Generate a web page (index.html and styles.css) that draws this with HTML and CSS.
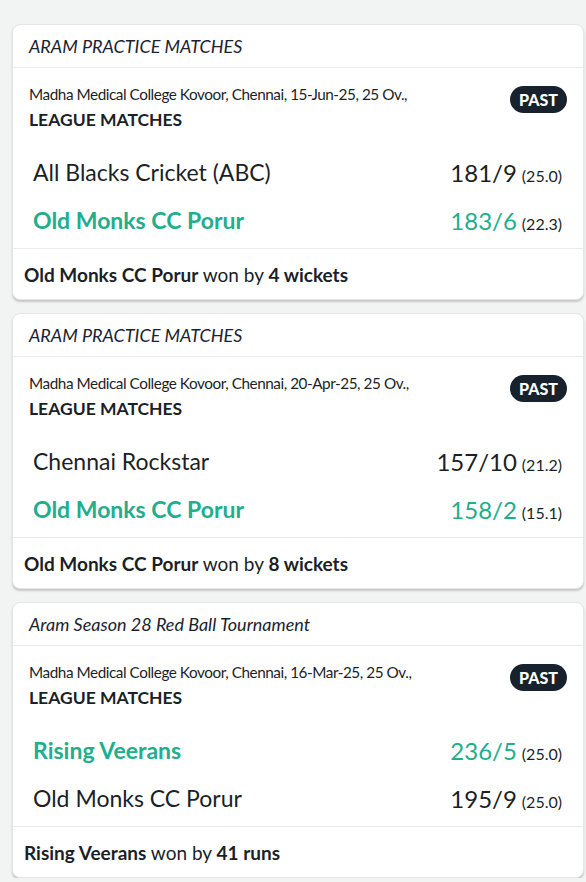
FILE: index.html
```html
<!DOCTYPE html>
<html>
<head>
<meta charset="utf-8">
<link rel="stylesheet" href="styles.css">
</head>
<body>
<div class="list">
  <div class="card">
    <div class="card-head">ARAM PRACTICE MATCHES</div>
    <div class="card-body">
      <div class="meta">
        <div class="meta-text">
          <div class="venue">Madha Medical College Kovoor, Chennai, 15-Jun-25, 25 Ov.,</div>
          <div class="stage">LEAGUE MATCHES</div>
        </div>
        <span class="badge">PAST</span>
      </div>
      <div class="teams">
        <div class="team">
          <span class="name">All Blacks Cricket (ABC)</span>
          <span class="score">181/9<small>(25.0)</small></span>
        </div>
        <div class="team win">
          <span class="name">Old Monks CC Porur</span>
          <span class="score">183/6<small>(22.3)</small></span>
        </div>
      </div>
    </div>
    <div class="result"><p><b>Old Monks CC Porur</b> won by <b>4 wickets</b></p></div>
  </div>

  <div class="card">
    <div class="card-head">ARAM PRACTICE MATCHES</div>
    <div class="card-body">
      <div class="meta">
        <div class="meta-text">
          <div class="venue">Madha Medical College Kovoor, Chennai, 20-Apr-25, 25 Ov.,</div>
          <div class="stage">LEAGUE MATCHES</div>
        </div>
        <span class="badge">PAST</span>
      </div>
      <div class="teams">
        <div class="team">
          <span class="name">Chennai Rockstar</span>
          <span class="score">157/10<small>(21.2)</small></span>
        </div>
        <div class="team win">
          <span class="name">Old Monks CC Porur</span>
          <span class="score">158/2<small>(15.1)</small></span>
        </div>
      </div>
    </div>
    <div class="result"><p><b>Old Monks CC Porur</b> won by <b>8 wickets</b></p></div>
  </div>

  <div class="card">
    <div class="card-head">Aram Season 28 Red Ball Tournament</div>
    <div class="card-body">
      <div class="meta">
        <div class="meta-text">
          <div class="venue">Madha Medical College Kovoor, Chennai, 16-Mar-25, 25 Ov.,</div>
          <div class="stage">LEAGUE MATCHES</div>
        </div>
        <span class="badge">PAST</span>
      </div>
      <div class="teams">
        <div class="team win">
          <span class="name">Rising Veerans</span>
          <span class="score">236/5<small>(25.0)</small></span>
        </div>
        <div class="team">
          <span class="name">Old Monks CC Porur</span>
          <span class="score">195/9<small>(25.0)</small></span>
        </div>
      </div>
    </div>
    <div class="result"><p><b>Rising Veerans</b> won by <b>41 runs</b></p></div>
  </div>
</div>
</body>
</html>
```

FILE: styles.css
```css
* { box-sizing: border-box; }
html, body {
  margin: 0;
  padding: 0;
  background: #f2f3f3;
  font-family: Lato, "Liberation Sans", sans-serif;
  color: #1b1f27;
}
.list {
  padding: 24px 2px 0 12px;
  display: flex;
  flex-direction: column;
  gap: 13px;
}
.card {
  background: #fff;
  border: 1px solid #e3e5e7;
  border-radius: 8px;
  box-shadow: 0 2px 2px rgba(0,0,0,0.18);
  overflow: hidden;
}
.card-head {
  height: 43px;
  padding: 0 16px;
  display: flex;
  align-items: center;
  font-style: italic;
  font-size: 18px;
  color: #1b2330;
  border-bottom: 1px solid #e8eaec;
}
.card-body {
  padding: 14px 16px 0 16px;
  border-bottom: 1px solid #e8eaec;
}
.meta {
  display: flex;
  justify-content: space-between;
  align-items: flex-start;
}
.venue {
  font-size: 15.3px;
  letter-spacing: -0.45px;
  line-height: 24px;
  color: #1b1f27;
}
.stage {
  margin-top: 1px;
  font-size: 17.5px;
  font-weight: 700;
  line-height: 26px;
  color: #1b1f27;
}
.badge {
  margin-top: 4px;
  background: #17222c;
  color: #fff;
  font-weight: 900;
  font-size: 16px;
  line-height: 27px;
  height: 27px;
  padding: 0 9px;
  border-radius: 14px;
}
.teams {
  padding: 15px 5px 4px 4px;
  display: flex;
  flex-direction: column;
}
.team {
  height: 48px;
  display: flex;
  justify-content: space-between;
  align-items: center;
  font-size: 23px;
}
.team .name { color: #1b1f27; }
.score { color: #1b1f27; font-size: 24px; }
.score small {
  font-size: 16px;
  margin-left: 5px;
  color: #1b1f27;
}
.win .name, .win .score { color: #22ad8c; }
.win .name { font-weight: 700; }
.win .score small { color: #1b1f27; }
.result {
  height: 50px;
  display: flex;
  align-items: center;
  padding: 0 11px;
  font-size: 19px;
}
.result p { margin: 0; }
.result b { font-weight: 700; }
```
